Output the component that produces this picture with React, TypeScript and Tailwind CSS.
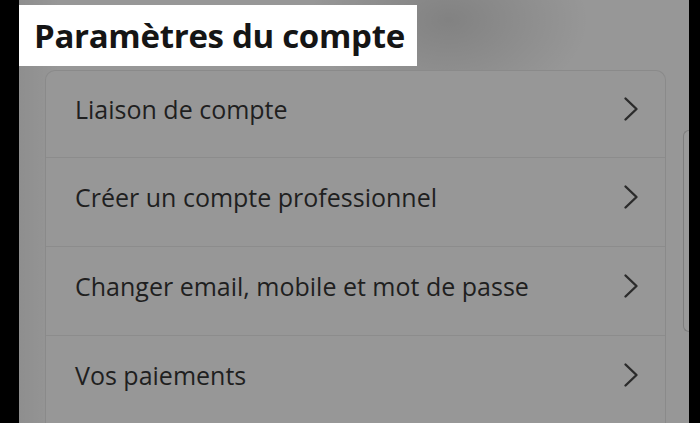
import React from "react";

const rows = [
  "Liaison de compte",
  "Créer un compte professionnel",
  "Changer email, mobile et mot de passe",
  "Vos paiements",
];

function Chevron() {
  return (
    <svg width="16" height="26" viewBox="0 0 16 26" fill="none" className="shrink-0">
      <path d="M2.5 2.5 L13.5 13 L2.5 23.5" stroke="#2b2b2b" strokeWidth="2.4" strokeLinecap="round" strokeLinejoin="round" />
    </svg>
  );
}

export default function App() {
  return (
    <div
      className="flex w-[700px] h-[423px] overflow-hidden bg-black"
      style={{ fontFamily: '"Open Sans", "Noto Sans", sans-serif' }}
    >
      <div className="w-[19px] shrink-0 bg-black" />
      <div className="relative flex-1 bg-[#979797] overflow-hidden">
        <div className="absolute inset-0 pointer-events-none bg-[radial-gradient(ellipse_140px_90px_at_430px_20px,rgba(0,0,0,0.14),transparent)]" />
        <div className="absolute inset-0 pointer-events-none bg-[linear-gradient(to_right,rgba(0,0,0,0.06),transparent_40px)]" />
        <div className="relative mt-[5px] w-[398px] h-[61px] bg-white flex items-center pl-[15px]">
          <span className="text-[33px] font-bold text-[#151515] tracking-[-0.3px] leading-none">
            Paramètres du compte
          </span>
        </div>
        <div className="relative ml-[26px] mt-[4px] w-[621px] rounded-t-[10px] border border-b-0 border-[#8a8a8a] bg-[#979797]">
          {rows.map((r, i) => (
            <div
              key={r}
              className={`flex items-center justify-between pb-[10px] pl-[29px] pr-[26px] ${i > 0 ? "h-[89px] border-t border-[#8c8c8c]" : "h-[86px]"}`}
            >
              <span className="text-[25px] text-[#1f1f1f] leading-none tracking-[0px]">{r}</span>
              <Chevron />
            </div>
          ))}
        </div>
        <div className="absolute left-[664px] top-[130px] w-[8px] h-[202px] rounded-l-[6px] border border-r-0 border-[#7e7e7e] bg-[#9a9a9a]" />
      </div>
      <div className="w-[11px] shrink-0 bg-black" />
    </div>
  );
}
